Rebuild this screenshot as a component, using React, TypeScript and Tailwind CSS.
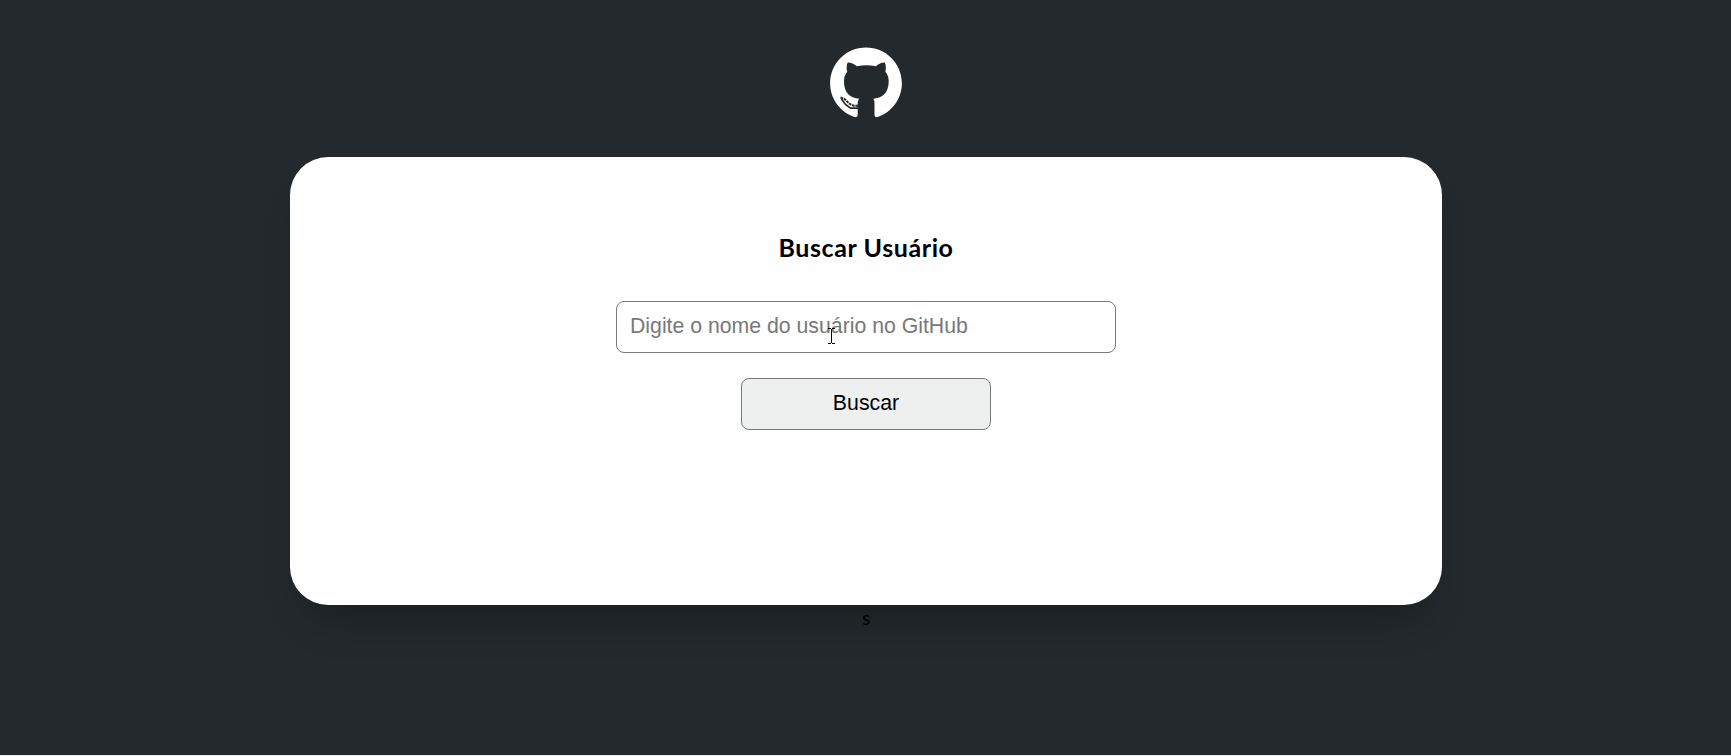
export default function App() {
  return (
    <div className="flex h-[756px] flex-col bg-[#e6e7e7] font-['Lato',sans-serif]">
      <main className="flex h-[755px] flex-col items-center bg-[#24292d] pt-[47px] pl-px">
        <svg viewBox="0 0 74 73" className="h-[73px] w-[74px]" aria-label="GitHub">
          <g transform="translate(.5 .5)">
            <path
              fill="#fff"
              d="M36.500 0C16.600 0 .6 16 .6 35.800C.6 51.500 10.800 64.800 25 69.500C27.200 70 28.200 69 28.200 67.500V56C28.200 53.800 28.800 52.300 29.800 51.300C21.500 50.300 14.500 46.500 14.500 34C14.500 30 15.600 26.800 17.800 24.300C16.700 21.500 17 17.500 18.200 15C21 14.800 24.600 16.500 27.500 18.700C33.200 17.400 40.500 17.400 46.200 18.700C49.100 16.500 52.500 14.800 55.200 15C56.500 17.500 56.700 21.500 55.800 24.300C58.100 26.800 59.200 30 59.200 34C59.200 46.500 51.800 50.300 43.800 51.300C44.600 52.500 45 54 45 56V67.500C45 69 46 70 48.200 69.500C62.300 64.800 72.400 51.500 72.400 35.800C72.400 16 56.400 0 36.500 0Z"
            />
            <path d="M12 51.500L16 57L21 60.600H29" fill="none" stroke="#24292d" strokeWidth="1.700" />
            <path d="M11 50L15 51.500L19.500 56L24 58.200H29" fill="none" stroke="#24292d" strokeWidth="1.900" strokeDasharray="2.800 .7" />
          </g>
        </svg>
        <section className="mt-[37px] flex h-[448px] w-[1152px] shrink-0 flex-col items-center rounded-[38px] bg-[#fefefe] pt-[74px] shadow-[0_27px_44px_-18px_rgba(0,0,0,0.3)]">
          <h1 className="h-8 text-[25px] leading-8 font-bold tracking-[0.6px] whitespace-nowrap text-black">Buscar Usuário</h1>
          <div className="relative mt-[38px]">
            <input
              className="block h-[52px] w-[500px] rounded-lg border border-[#77797d] bg-[#fefefe] px-[13px] pb-[2px] font-['Liberation_Sans',Arial,sans-serif] text-[21.250px] text-black placeholder:text-[#77797a]"
              placeholder="Digite o nome do usuário no GitHub"
            />
            <svg className="absolute top-[27px] left-[212px] h-[16px] w-[7px]" viewBox="0 0 7 16" aria-hidden="true">
              <path d="M0 .5h3M4 .5h3M3.500 1v14M0 15.500h3M4 15.500h3" stroke="#000" fill="none" />
            </svg>
          </div>
          <button className="mt-[25px] h-[52px] w-[250px] rounded-lg border border-[#77797d] bg-[#eef0f0] font-['Liberation_Sans',Arial,sans-serif] text-[21.300px] text-black">
            Buscar
          </button>
        </section>
        <p className="mt-[1px] text-[19px] leading-6 text-black">s</p>
      </main>
    </div>
  );
}
